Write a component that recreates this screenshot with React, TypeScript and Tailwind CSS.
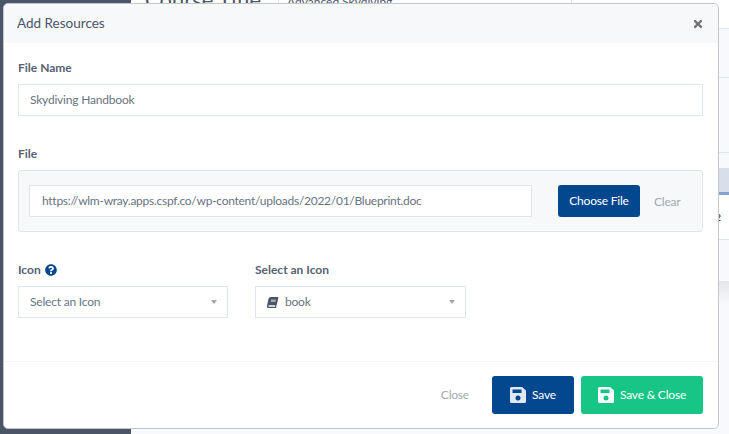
import React from 'react';
import { FaBook, FaQuestionCircle, FaTimes } from 'react-icons/fa';

const labelClass = 'text-[12px] leading-[18px] font-bold text-[#566273]';
const inputClass = 'flex items-center h-8 border border-[#dfe5f0] bg-white text-[12px] tracking-[-0.2px] text-[#687382]';

function SaveIcon({ className }: { className?: string }) {
    return (
        <svg width="16" height="16" viewBox="0 0 16 16" className={className}>
            <path
                fill="currentColor"
                fillRule="evenodd"
                d="M1.5 0H12l4 3.5v11a1.5 1.5 0 0 1-1.500 1.500h-13A1.500 1.500 0 0 1 0 14.500v-13A1.500 1.500 0 0 1 1.500 0ZM2.500 2.500v3.500h9V2.500ZM8 8.500a2.500 2.500 0 1 0 0 5 2.500 2.500 0 0 0 0-5Z"
            />
        </svg>
    );
}

function Background() {
    return (
        <div className="absolute inset-0 flex overflow-hidden bg-[#f7f9fc]">
            <div className="w-[131px] shrink-0 bg-[#4a5568]" />
            <div className="flex-1 flex flex-col">
                <div className="flex h-[29px] shrink-0 bg-white border-b border-[#dfe5f0]">
                    <div className="w-[147px] pl-[14px] text-[22px] leading-[0px] text-[#4a5568]">Course Title</div>
                    <div className="w-[293px] pl-2 border-l border-[#dfe5f0] text-xs leading-[4px] text-[#4a5568]">Advanced Skydiving</div>
                    <div className="flex-1 border-l border-[#dfe5f0]" />
                </div>
                <div className="h-[49px] shrink-0 border-b border-[#dfe5f0]" />
                <div className="h-[75px] shrink-0 border-b border-[#dfe5f0]" />
                <div className="h-[15px] shrink-0" />
                <div className="h-[27px] shrink-0 bg-[#d7dfeb] border-b-[3px] border-[#86a3cf]" />
                <div className="flex items-center justify-end h-[45px] shrink-0 pr-[8px] bg-white border-b border-[#dfe5f0] text-[10px] text-[#222]">2</div>
                <div className="h-[41px] shrink-0" />
                <div className="h-[24px] shrink-0 bg-gradient-to-b from-[#e4e6ea] to-[#f7f9fc]" />
            </div>
        </div>
    );
}

function Select({ width, children }: { width: string; children: React.ReactNode }) {
    return (
        <div className={`${inputClass} ${width} justify-between pl-[11px] pr-[10px]`}>
            <div className="flex items-center gap-[7px]">{children}</div>
            <span className="border-x-[3.5px] border-t-[4px] border-x-transparent border-t-[#a0a6ad]" />
        </div>
    );
}

export default function App() {
    return (
        <div className="relative w-[729px] h-[434px] overflow-hidden font-['Lato','Liberation_Sans',sans-serif]">
            <Background />

            {/* Modal */}
            <div className="absolute left-[3px] top-[3px] w-[716px] h-[426px] flex flex-col bg-white border border-[#c4c6c9] rounded-[5px]">
                <div className="flex items-center justify-between h-[39px] shrink-0 pl-[13px] pr-[14px] bg-[#f7f8fa] rounded-t-[5px]">
                    <span className="text-[13.5px] text-[#4a5568]">Add Resources</span>
                    <FaTimes size={12} className="mt-px text-[#6f6f6f]" />
                </div>

                <div className="flex-1 pl-[14px] pr-[15px] pt-[16px]">
                    <div className={labelClass}>File Name</div>
                    <div className={`${inputClass} mt-[7px] px-[11px]`}>Skydiving Handbook</div>

                    <div className={`${labelClass} mt-[29px]`}>File</div>
                    <div className="flex items-center mt-[7px] h-[62px] pl-[10px] bg-[#f7f8fa] border border-[#dfe5f0] rounded-[3px]">
                        <div className={`${inputClass} w-[503px] px-[12px] tracking-[-0.27px] text-[#7d8590]`}>
                            https://wlm-wray.apps.cspf.co/wp-content/uploads/2022/01/Blueprint.doc
                        </div>
                        <button className="ml-[26px] w-[82px] h-8 bg-[#03478e] rounded-[3px] text-[12px] tracking-[-0.2px] text-white">Choose File</button>
                        <span className="ml-[14px] mt-[2px] text-[12px] tracking-[-0.2px] text-[#a3a9b0]">Clear</span>
                    </div>

                    <div className="flex gap-[27px] mt-[29px]">
                        <div>
                            <div className={`${labelClass} flex items-center gap-[4px]`}>
                                Icon <FaQuestionCircle size={12} className="text-[#03478e]" />
                            </div>
                            <div className="mt-[7px]">
                                <Select width="w-[210px]">Select an Icon</Select>
                            </div>
                        </div>
                        <div>
                            <div className={labelClass}>Select an Icon</div>
                            <div className="mt-[7px]">
                                <Select width="w-[211px]">
                                    <FaBook size={11} className="-skew-x-12 text-[#4a5568]" />
                                    <span>book</span>
                                </Select>
                            </div>
                        </div>
                    </div>
                </div>

                <div className="flex items-center justify-end h-[67px] shrink-0 pr-[15px] border-t border-[#f4f5f7]">
                    <span className="mr-[23px] text-[12px] tracking-[-0.2px] text-[#a3a9b0]">Close</span>
                    <button className="flex items-center justify-center gap-[6px] w-[82px] h-[38px] bg-[#03478e] rounded-[3px] text-[12px] tracking-[-0.2px] text-white">
                        <SaveIcon className="text-[#dfe8f4]" /> Save
                    </button>
                    <button className="flex items-center justify-center gap-[6px] ml-[7px] w-[122px] h-[38px] bg-[#17c586] rounded-[3px] text-[12px] tracking-[-0.2px] text-white">
                        <SaveIcon /> Save &amp; Close
                    </button>
                </div>
            </div>
        </div>
    );
}
